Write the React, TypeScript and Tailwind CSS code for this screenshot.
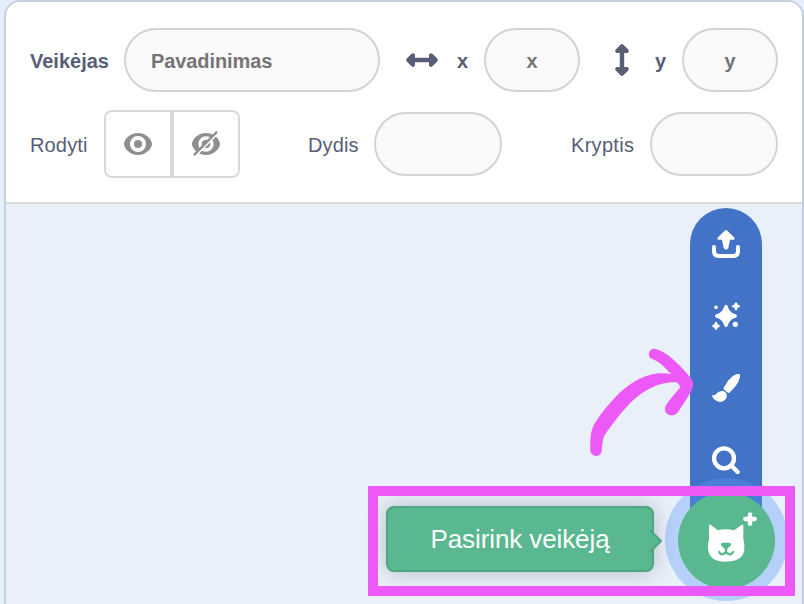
import React from 'react';

const pill = 'h-16 shrink-0 rounded-full border-2 border-[#d3d3d3] bg-[#fafafa] text-[20px] font-bold text-[#757575] placeholder:text-[#757575] outline-none';

function HorizontalArrow() {
  return (
    <svg className="h-[16px] w-[34px]" viewBox="0 0 34 16" fill="none" stroke="#575e75" strokeLinecap="round" strokeLinejoin="round">
      <path d="M5 8H29" strokeWidth="4.4" />
      <path d="M8 3.2L3.2 8L8 12.8ZM26 3.2L30.8 8L26 12.8Z" fill="#575e75" strokeWidth="4" />
    </svg>
  );
}

function VerticalArrow() {
  return (
    <svg className="h-[34px] w-[16px]" viewBox="0 0 16 34" fill="none" stroke="#575e75" strokeLinecap="round" strokeLinejoin="round">
      <path d="M8 5V29" strokeWidth="4.4" />
      <path d="M3.2 8L8 3.2L12.8 8ZM3.2 26L8 30.8L12.8 26Z" fill="#575e75" strokeWidth="4" />
    </svg>
  );
}

function Eye() {
  return (
    <svg className="h-[22px] w-[28px]" viewBox="0 0 84 66">
      <path fillRule="evenodd" fill="#8f8f8f" d="M42 0C66 0 84 20 84 33S66 66 42 66S0 46 0 33S18 0 42 0ZM42 9A24 24 0 1 0 42 57A24 24 0 1 0 42 9ZM42 21A12 12 0 1 1 42 45A12 12 0 1 1 42 21Z" />
    </svg>
  );
}

function EyeOff() {
  return (
    <svg className="h-[26px] w-[28px]" viewBox="0 -6 84 78">
      <path fillRule="evenodd" fill="#8f8f8f" d="M42 0C66 0 84 20 84 33S66 66 42 66S0 46 0 33S18 0 42 0ZM42 10A23 23 0 1 0 42 56A23 23 0 1 0 42 10ZM42 20A13 13 0 1 1 42 46A13 13 0 1 1 42 20Z" />
      <path d="M12 67L78 0" stroke="white" strokeWidth="6" />
      <path d="M8 64L73 -2" stroke="#8f8f8f" strokeWidth="7" strokeLinecap="round" />
    </svg>
  );
}

function UploadIcon() {
  return (
    <svg className="size-7" viewBox="0 0 84 84" fill="white">
      <path d="M38 2Q42 -2 46 2L66 22Q71 29 63 29H54L49 54Q42 65 35 54L30 29H21Q13 29 18 22Z" />
      <path d="M6 51V63Q6 78 21 78H63Q78 78 78 63V51" fill="none" stroke="white" strokeWidth="12" strokeLinecap="round" />
    </svg>
  );
}

function SparkleIcon() {
  return (
    <svg className="size-7" viewBox="96 306 84 84" fill="white">
      <path d="M133 318Q138 311 143 318Q147 338 167 343Q175 348 167 353Q148 357 143 378Q138 385 133 378Q128 357 109 353Q101 348 109 343Q128 338 133 318Z" />
      <path d="M165 308Q168 305 171 308L173 314L179 316Q182 319 179 321L173 323L171 329Q168 332 165 329L163 323L157 321Q154 319 157 316L163 314ZM105 367Q108 364 111 367L113 373L118 375Q121 378 118 381L113 383L111 388Q108 391 105 388L103 383L98 381Q95 378 98 375L103 373Z" />
      <circle cx="108" cy="322" r="5.5" />
      <circle cx="166" cy="373" r="8" />
    </svg>
  );
}

function BrushIcon() {
  return (
    <svg className="size-7" viewBox="96 102 84 84" fill="white">
      <path d="M176 102Q181 102 180 109Q179 122 167 138Q158 149 148 158Q145 160 142 157L131 148Q130 145 133 140Q141 123 155 111Q169 100 176 102Z" />
      <path d="M128 153Q132 152 138 159Q142 166 139 174Q134 185 121 186Q107 185 99 174Q95 167 97 165Q102 168 108 163Q116 153 128 153Z" />
    </svg>
  );
}

function SearchIcon() {
  return (
    <svg className="size-7" viewBox="0 0 84 84" fill="none" stroke="white" strokeLinecap="round">
      <circle cx="36" cy="37" r="30" strokeWidth="13" />
      <path d="M60 61L77 78" strokeWidth="13" />
    </svg>
  );
}

function CatIcon() {
  return (
    <svg className="h-[60px] w-16" viewBox="0 0 192 180">
      <path fill="white" d="M27 48Q27 42 32 44L53 61Q78 54 103 61L125 44Q130 42 130 48V88Q133 96 133 112Q134 155 78 155Q23 155 24 110Q24 98 27 88Z" />
      <path fill="#59b890" d="M68 98H88Q97 101 91 108L82 116Q78 119 74 116L65 108Q59 101 68 98Z" />
      <path fill="none" stroke="#59b890" strokeWidth="7" strokeLinecap="round" d="M78 114V125M58 126Q61 135 69 132Q76 131 78 125Q81 131 88 133Q95 134 99 126" />
      <path stroke="white" strokeWidth="13" strokeLinecap="round" d="M150 13V41M136 27H164" />
    </svg>
  );
}

export default function App() {
  return (
    <div className="relative h-[604px] w-[804px] overflow-hidden bg-[#e5f0ff] pl-1 font-['Liberation_Sans',Arial,sans-serif] text-[20px] text-[#575e75]">
      <section className="h-[624px] w-[800px] overflow-hidden rounded-[16px] border-2 border-[#c6cedb] bg-[#e9f0fa]">
        <header className="flex h-[202px] flex-col gap-[18px] border-b-2 border-[#d9d9d9] bg-white pt-[26px] pr-6 pl-6">
          <div className="flex h-16 shrink-0 items-center font-bold">
            <label className="w-[94px] pt-0.5">Veikėjas</label>
            <input className={`${pill} w-64 pt-0.5 pl-[25px] tracking-[-0.1px]`} placeholder="Pavadinimas" />
            <div className="ml-[25px] flex items-center"><HorizontalArrow /></div>
            <label className="ml-[18px] w-[27px] pt-0.5">x</label>
            <input className={`${pill} w-24 pt-0.5 text-center`} placeholder="x" />
            <div className="ml-[34px] flex items-center"><VerticalArrow /></div>
            <label className="ml-auto w-[27px] pt-0.5">y</label>
            <input className={`${pill} w-24 pt-0.5 text-center`} placeholder="y" />
          </div>
          <div className="flex h-[68px] shrink-0 items-center">
            <label className="w-[74px] pt-0.5 tracking-[0.15px]">Rodyti</label>
            <div className="flex h-[68px] w-[136px] rounded-[8px] border-2 border-[#d9d9d9]">
              <button className="flex w-16 items-center justify-center"><Eye /></button>
              <button className="flex flex-1 items-center justify-center border-l-4 border-[#d9d9d9]"><EyeOff /></button>
            </div>
            <label className="ml-[68px] w-[66px] pt-0.5 tracking-[0.15px]">Dydis</label>
            <input className={`${pill} w-32`} />
            <label className="ml-auto w-[79px] pt-0.5 tracking-[0.3px]">Kryptis</label>
            <input className={`${pill} w-32`} />
          </div>
        </header>
      </section>

      <nav className="absolute top-[208px] left-[690px] flex h-[332px] w-[72px] flex-col rounded-t-full bg-[#4373c7]">
        <button className="flex h-[72px] items-center justify-center"><UploadIcon /></button>
        <button className="flex h-[72px] items-center justify-center"><SparkleIcon /></button>
        <button className="flex h-[72px] items-center justify-center"><BrushIcon /></button>
        <button className="flex h-[72px] items-center justify-center"><SearchIcon /></button>
      </nav>

      <div className="absolute top-[478px] left-[664.5px] size-[123px] rounded-full bg-[#5596f5]/35" />
      <button className="absolute top-[491.5px] left-[677.5px] size-[97px] rounded-full bg-[#59b890]">
        <span className="absolute top-[18.5px] left-[22.5px]"><CatIcon /></span>
      </button>

      <div className="absolute top-[506px] left-[386px] flex h-[66px] w-[268px] items-center justify-center rounded-[8px] border-2 border-[#4fa580] bg-[#59b890] text-[26px] text-white shadow-[0_0_20px_rgba(60,60,80,0.3)]">
        <span className="tracking-[-0.1px]">Pasirink veikėją</span>
        <svg className="absolute top-[21px] left-[259px] h-6 w-4" viewBox="0 0 16 24">
          <path d="M3 1L14 12L3 23" fill="#59b890" stroke="#4fa580" strokeWidth="2" strokeLinejoin="round" />
        </svg>
      </div>

      <div className="absolute top-[486px] left-[368px] h-[110px] w-[427px] border-[10px] border-[#ec59f7]" />

      <svg className="absolute top-[330px] left-[570px] size-[140px]" viewBox="0 0 420 420">
        <path fill="#ec59f7" d="M61 361C61 313 62 299 80 271C110 228 150 180 195 154C235 131 270 126 304 133C281 108 267 95 246 87C228 78 238 53 256 57C288 63 328 103 358 139C372 155 373 167 363 184C350 208 338 226 326 243C317 259 298 259 288 248C282 239 285 229 292 220C304 202 319 187 331 172Q326 158 316 156C265 157 220 180 183 217C157 243 127 283 104 315C96 331 98 343 95 362C93 383 63 383 61 361Z" />
      </svg>
    </div>
  );
}
